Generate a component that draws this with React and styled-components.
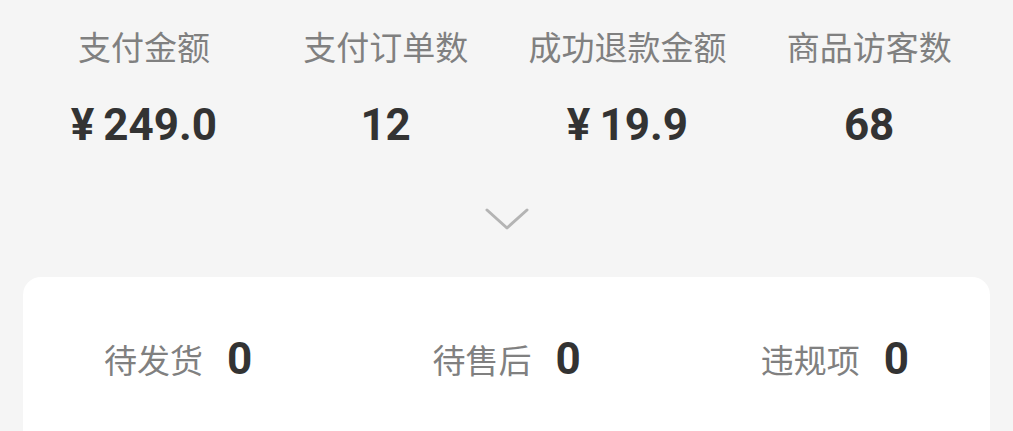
import React from "react";
import styled, { createGlobalStyle } from "styled-components";

const GlobalStyle = createGlobalStyle`
  html, body {
    margin: 0;
    padding: 0;
    background: #f5f5f5;
    font-family: Roboto, "Noto Sans CJK SC", sans-serif;
  }
`;

const stats = [
  { label: "支付金额", value: "249.0", money: true },
  { label: "支付订单数", value: "12" },
  { label: "成功退款金额", value: "19.9", money: true },
  { label: "商品访客数", value: "68" },
];

const todos = [
  { label: "待发货", count: 0 },
  { label: "待售后", count: 0 },
  { label: "违规项", count: 0 },
];

function App() {
  return (
    <Page>
      <GlobalStyle />
      <StatsRow>
        {stats.map((s) => (
          <Stat key={s.label}>
            <StatLabel>{s.label}</StatLabel>
            <StatValue>
              {s.money && <Yen>¥</Yen>}
              {s.value}
            </StatValue>
          </Stat>
        ))}
      </StatsRow>
      <Toggle>
        <svg width="44" height="22" viewBox="0 0 44 22" fill="none">
          <path d="M2 2 L22 20 L42 2" stroke="#b4b4b4" strokeWidth="3" strokeLinecap="round" strokeLinejoin="round" />
        </svg>
      </Toggle>
      <Card>
        {todos.map((t) => (
          <Todo key={t.label}>
            <TodoLabel>{t.label}</TodoLabel>
            <TodoCount>{t.count}</TodoCount>
          </Todo>
        ))}
      </Card>
    </Page>
  );
}

const Page = styled.div`
  padding: 0 23px;
  height: 431px;
  overflow: hidden;
`;

const StatsRow = styled.div`
  display: grid;
  grid-template-columns: repeat(4, 1fr);
  padding-top: 24px;
`;

const Stat = styled.div`
  display: flex;
  flex-direction: column;
  align-items: center;
`;

const StatLabel = styled.div`
  font-family: "Noto Sans CJK SC", sans-serif;
  font-size: 33px;
  line-height: 44px;
  color: #808080;
`;

const StatValue = styled.div`
  margin-top: 35px;
  font-family: Roboto, sans-serif;
  font-weight: 700;
  font-size: 44px;
  line-height: 44px;
  color: #333333;
  display: flex;
  align-items: baseline;
`;

const Yen = styled.span`
  margin-right: 9px;
`;

const Toggle = styled.div`
  display: flex;
  justify-content: center;
  margin-top: 61px;
`;

const Card = styled.div`
  margin-top: 47px;
  background: #ffffff;
  border-radius: 18px 18px 0 0;
  height: 200px;
  padding: 60px 81px 0;
  display: flex;
  justify-content: space-between;
  align-items: flex-start;
  box-sizing: border-box;
`;

const Todo = styled.div`
  display: flex;
  align-items: center;
  gap: 24px;
`;

const TodoLabel = styled.span`
  font-family: "Noto Sans CJK SC", sans-serif;
  font-size: 33px;
  line-height: 44px;
  color: #808080;
`;

const TodoCount = styled.span`
  font-family: Roboto, sans-serif;
  font-weight: 700;
  font-size: 44px;
  line-height: 44px;
  color: #333333;
`;

export default App;
